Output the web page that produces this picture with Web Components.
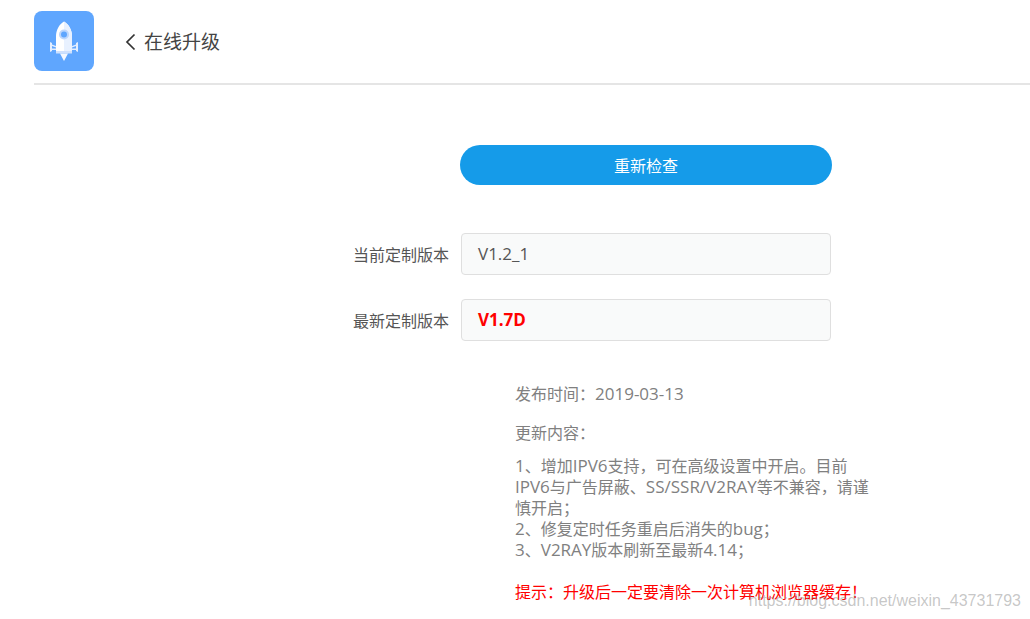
<!DOCTYPE html>
<html lang="zh-CN">
<head>
  <meta charset="UTF-8">
  <title>在线升级</title>
  <style>
    html, body { margin: 0; height: 100%; background: #fff; overflow: hidden; }
    body { font-family: "Open Sans", "Noto Sans CJK SC", sans-serif; color: #333; }
    /* latin runs sit a little larger than the CJK around them */
    .l { font-size: 17px; line-height: 1; }
  </style>
</head>
<body>
  <upgrade-page>
    <page-header slot="header">在线升级</page-header>
    <pill-button>重新检查</pill-button>
    <version-row label="当前定制版本"><span class="l">V1.2_1</span></version-row>
    <version-row label="最新定制版本" latest><span class="l">V1.7D</span></version-row>
    <release-notes>
      <p class="date">发布时间：<span class="l">2019-03-13</span></p>
      <p class="head">更新内容：</p>
      <p class="list"><span class="l">1</span>、增加<span class="l">IPV6</span>支持，可在高级设置中开启。目前<br><span class="l">IPV6</span>与广告屏蔽、<span class="l">SS/SSR/V2RAY</span>等不兼容，请谨<br>慎开启；<br><span class="l">2</span>、修复定时任务重启后消失的<span class="l">bug</span>；<br><span class="l">3</span>、<span class="l">V2RAY</span>版本刷新至最新<span class="l">4.14</span>；</p>
      <p class="tip">提示：升级后一定要清除一次计算机浏览器缓存！</p>
    </release-notes>
    <water-mark>https://blog.csdn.net/weixin_43731793</water-mark>
  </upgrade-page>

  <script>
    class UpgradePage extends HTMLElement {
      constructor() {
        super();
        this.attachShadow({ mode: 'open' }).innerHTML = `
          <style>
            :host { display: block; position: relative; height: 619px; overflow: hidden; }
            .body { display: flex; flex-direction: column; padding: 60px 0 0 460px; }
          </style>
          <slot name="header"></slot>
          <div class="body"><slot></slot></div>
        `;
      }
    }

    class PageHeader extends HTMLElement {
      constructor() {
        super();
        this.attachShadow({ mode: 'open' }).innerHTML = `
          <style>
            :host {
              display: flex; align-items: center; height: 83px;
              margin-left: 34px; border-bottom: 2px solid #e5e5e5;
            }
            .logo { width: 60px; height: 60px; flex: none; margin-top: -1px; }
            .back { width: 12px; height: 18px; margin: 0 8px 0 30px; flex: none; }
            .title { font-size: 19px; line-height: 28px; color: #444; }
          </style>
          <svg class="logo" viewBox="0 0 60 60">
            <rect width="60" height="60" rx="8" fill="#5fa6fe"/>
            <path d="M16 31l2 1v8l-2 1zM44 31l-2 1v8l2 1z" fill="#e3eeff"/>
            <path d="M18 33.500l4 1.500v1.500l-4-1.500zM42 33.500l-4 1.500v1.500l4-1.500zM18 37.500h4V39h-4zM42 37.500h-4V39h4z" fill="#e3eeff"/>
            <path d="M30 10.500c5 3 8 8.500 8 15V40H22V25.500c0-6.500 3-12 8-15z" fill="#fff"/>
            <path d="M30 10.500c5 3 8 8.500 8 15V40h-8z" fill="#e8f1ff"/>
            <path d="M22 40h16v2.500H22z" fill="#cfe1fd"/>
            <path d="M26 42.500h8l-4 7.500z" fill="#f4f8ff"/>
            <circle cx="30" cy="23.500" r="5" fill="#bcd6fc"/>
            <circle cx="30" cy="23.500" r="3" fill="#5fa6fe"/>
          </svg>
          <svg class="back" viewBox="0 0 12 18"><path d="M10.500 1.500L3 9l7.500 7.500" fill="none" stroke="#333" stroke-width="1.700"/></svg>
          <span class="title"><slot></slot></span>
        `;
      }
    }

    class PillButton extends HTMLElement {
      constructor() {
        super();
        this.attachShadow({ mode: 'open' }).innerHTML = `
          <style>
            :host {
              display: flex; align-items: center; justify-content: center;
              width: 372px; height: 40px; border-radius: 20px;
              background: #159be9; color: #fff; font-size: 16px; margin-bottom: 48px;
            }
          </style>
          <slot></slot>
        `;
      }
    }

    class VersionRow extends HTMLElement {
      constructor() {
        super();
        this.attachShadow({ mode: 'open' }).innerHTML = `
          <style>
            :host { display: block; position: relative; width: 371px; margin: 0 0 24px 1px; }
            .label {
              position: absolute; right: 383px; top: 11px; white-space: nowrap;
              font-size: 16px; line-height: 22px; color: #555;
            }
            .box {
              height: 40px; padding: 0 16px; width: 336px;
              border: 1px solid #dfdfdf; border-radius: 4px; background: #f9fafa;
              font-size: 16px; line-height: 40px; color: #555;
            }
            :host([latest]) .box { color: #f00; font-weight: 700; }
          </style>
          <span class="label"></span>
          <div class="box"><slot></slot></div>
        `;
        this.shadowRoot.querySelector('.label').textContent = this.getAttribute('label');
      }
    }

    class ReleaseNotes extends HTMLElement {
      constructor() {
        super();
        this.attachShadow({ mode: 'open' }).innerHTML = `
          <style>
            :host { display: block; margin: 19px 0 0 55px; width: 380px; font-size: 16px; line-height: 21px; color: #808080; white-space: nowrap; }
            ::slotted(p) { margin: 0; }
            ::slotted(.head) { margin-top: 18px; }
            ::slotted(.list) { margin-top: 12px; }
            ::slotted(.tip) { margin-top: 21px; color: #f00; }
          </style>
          <slot></slot>
        `;
      }
    }

    class WaterMark extends HTMLElement {
      constructor() {
        super();
        this.attachShadow({ mode: 'open' }).innerHTML = `
          <style>
            :host {
              position: absolute; right: 9px; top: 590px; white-space: nowrap;
              font: 16px/22px "Liberation Sans", sans-serif; color: rgba(130,130,130,.45);
            }
          </style>
          <slot></slot>
        `;
      }
    }

    customElements.define('upgrade-page', UpgradePage);
    customElements.define('page-header', PageHeader);
    customElements.define('pill-button', PillButton);
    customElements.define('version-row', VersionRow);
    customElements.define('release-notes', ReleaseNotes);
    customElements.define('water-mark', WaterMark);
  </script>
</body>
</html>
